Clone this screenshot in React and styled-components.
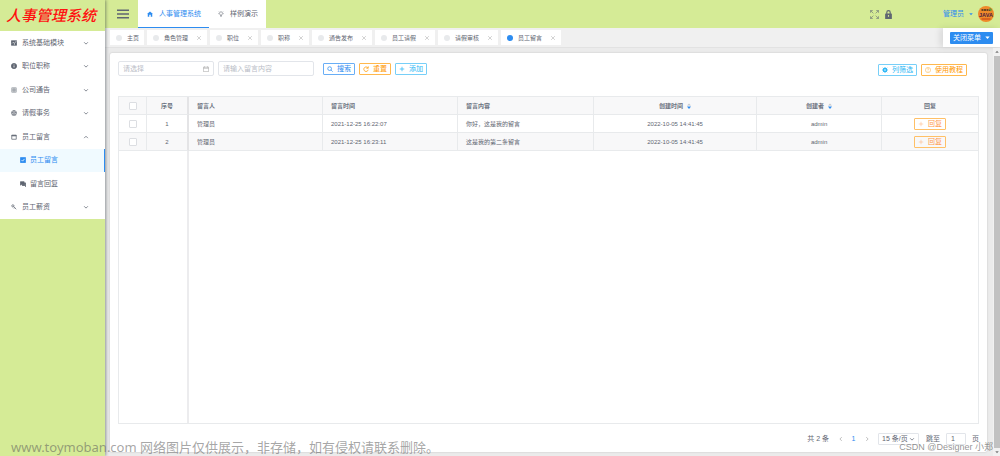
import React from 'react';
import styled, { createGlobalStyle, css } from 'styled-components';

const Global = createGlobalStyle`
  * { box-sizing: border-box; }
  body { margin: 0; background: #d5eb96; color: #5f6672; font: 7px/12px "Liberation Sans", "Noto Sans CJK SC", sans-serif; }
  button, input, select { font: inherit; color: inherit; margin: 0; padding: 0; }
  a { color: inherit; text-decoration: none; }
  svg { display: block; flex: none; }
`;

const Shell = styled.div`
  position: relative;
  display: grid;
  grid-template-columns: 105px minmax(0, 1fr);
  height: 100vh;
  overflow: hidden;
`;

const Side = styled.aside`
  position: relative;
  z-index: 2;
  background: #d5eb96;
  box-shadow: 1px 0 3px rgba(30, 40, 50, 0.45);
`;

const Logo = styled.h1`
  margin: 0;
  height: 31px;
  padding-left: 6px;
  color: #ff1010;
  font: italic 500 15px/29px "Noto Sans CJK SC", sans-serif;
  white-space: nowrap;
`;

const Menu = styled.nav`
  display: grid;
  grid-auto-rows: 1fr;
  height: 188px;
  background: #fff;
`;

const MenuItem = styled.a`
  display: flex;
  align-items: center;
  gap: ${(p) => (p.$sub ? 4 : 5)}px;
  padding: 0 15px 0 ${(p) => (p.$sub ? 20 : 11)}px;
  color: ${(p) => (p.$active ? '#2d8cf0' : '#5f6672')};
  background: ${(p) => (p.$active ? '#f0faff' : 'transparent')};
  border-right: 1px solid ${(p) => (p.$active ? '#2d8cf0' : 'transparent')};
`;

const MenuText = styled.span`
  flex: 1;
`;

const Main = styled.div`
  display: flex;
  flex-direction: column;
  min-width: 0;
  background: #ebebeb;
`;

const Header = styled.header`
  display: flex;
  align-items: center;
  flex: none;
  height: 28px;
  background: #d5eb96;
`;

const IconButton = styled.button`
  display: grid;
  place-items: center;
  border: 0;
  background: none;
`;

const Burger = styled(IconButton)`
  width: 33px;
  height: 28px;
  padding-left: 3px;
`;

const TopLink = styled.a`
  display: flex;
  align-items: center;
  gap: 6px;
  height: 28px;
  padding: 0 8px 0 9px;
  background: #fff;
  color: ${(p) => (p.$active ? '#2d8cf0' : '#5f6672')};
  border-bottom: 1px solid ${(p) => (p.$active ? '#2d8cf0' : '#fff')};
`;

const Account = styled.div`
  display: flex;
  align-items: center;
  gap: 5px;
  margin-left: auto;
  padding-right: 6px;
`;

const UserButton = styled.button`
  display: flex;
  align-items: center;
  gap: 5px;
  margin-left: 45px;
  border: 0;
  background: none;
  color: #2d8cf0;
`;

const TabBar = styled.div`
  display: flex;
  align-items: center;
  flex: none;
  height: 20px;
  padding-left: 5px;
  background: #f0f0f0;
  border-bottom: 1px solid #e2e2e2;
`;

const Tabs = styled.div`
  display: flex;
  gap: 3px;
`;

const Tab = styled.div`
  display: flex;
  align-items: center;
  height: 15px;
  padding: 0 5px 0 6px;
  background: #fff;
  font-size: 6px;
`;

const TabLink = styled.a`
  display: flex;
  align-items: center;
  gap: 5px;

  &::before {
    content: '';
    width: 6px;
    height: 6px;
    border-radius: 50%;
    background: ${(p) => (p.$active ? '#2d8cf0' : '#e8eaec')};
  }
`;

const TabClose = styled(IconButton)`
  margin-left: 8px;
  color: #aaa;
`;

const CloseBox = styled.div`
  display: flex;
  align-items: center;
  height: 19px;
  margin-left: auto;
  padding: 0 7px;
  background: #fff;
  box-shadow: -3px 0 6px rgba(0, 0, 0, 0.1);
`;

const CloseMenu = styled.button`
  display: flex;
  align-items: center;
  gap: 4px;
  height: 12px;
  padding: 0 3px;
  border: 0;
  border-radius: 1px;
  background: #2d8cf0;
  color: #fff;
`;

const Body = styled.div`
  display: flex;
  flex: 1;
  min-height: 0;
`;

const Scroll = styled.div`
  display: flex;
  flex: 1;
  min-width: 0;
  padding: 5px 6px 4px 5px;
`;

const Card = styled.main`
  display: flex;
  flex-direction: column;
  flex: 1;
  min-width: 0;
  padding: 8px 8px 7px;
  border-radius: 2px;
  background: #fff;
  box-shadow: 0 0 2px rgba(0, 0, 0, 0.2);
`;

const ScrollBar = styled.div`
  display: flex;
  flex-direction: column;
  align-items: center;
  gap: 2px;
  width: 7px;
  padding: 2px 0;
  background: #f1f1f1;
  color: #777;
`;

const Thumb = styled.div`
  flex: 1;
  width: 6px;
  background: #c1c1c1;
`;

const Tools = styled.form`
  display: flex;
  align-items: center;
  gap: 4px;
  height: 15px;
`;

const Field = styled.label`
  display: flex;
  align-items: center;
  width: 96px;
  height: 15px;
  padding: 0 4px;
  border: 1px solid #e2e5ea;
  border-radius: 2px;
  color: #999;
`;

const Input = styled.input`
  flex: 1;
  min-width: 0;
  border: 0;
  outline: 0;
  background: none;
  &::placeholder { color: #b9bdc6; opacity: 1; }
`;

const tones = {
  blue: css`color: #2d8cf0; border-color: #69aef6;`,
  orange: css`color: #ff9900; border-color: #ffb84d;`,
  cyan: css`color: #2db7f5; border-color: #77cff8;`,
  reply: css`color: #ff9a4d; border-color: #ffc067;`,
};

const Button = styled.button`
  display: inline-flex;
  align-items: center;
  gap: 4px;
  height: 12px;
  padding: 0 3px;
  border: 1px solid;
  border-radius: 1px;
  background: transparent;
  font-size: 7px;
  white-space: nowrap;
  vertical-align: middle;
  ${(p) => tones[p.$tone]}
`;

const Actions = styled.div`
  display: flex;
  gap: 4px;
  margin-left: 5px;
`;

const RightActions = styled(Actions)`
  margin: 3px 12px 0 auto;
`;

const TableBox = styled.div`
  flex: 1;
  display: grid;
  grid-template-columns: 70px 1fr;
  grid-template-rows: auto 1fr;
  margin-top: 20px;
  border: 1px solid #e8eaec;
`;

const Table = styled.table`
  grid-column: 1 / -1;
  width: 100%;
  table-layout: fixed;
  border-collapse: separate;
  border-spacing: 0;
  font-size: 6px;
`;

const Row = styled.tr`
  height: 18px;
  background: ${(p) => (p.$shade ? '#f8f8f9' : '#fff')};
`;

const cell = css`
  padding: 0 8px;
  border-right: 1px solid #e8eaec;
  border-bottom: 1px solid #e8eaec;
  text-align: ${(p) => (p.$left ? 'left' : 'center')};
  &:last-child { border-right: 0; }
  &:nth-child(2) { border-right: 2px solid #e4e4e6; }
`;

const Th = styled.th`${cell} font-weight: 700; color: #6b7280;`;
const Td = styled.td`${cell}`;

const Check = styled.input`
  appearance: none;
  display: block;
  width: 8px;
  height: 8px;
  margin: 0 auto;
  border: 1px solid #dcdee2;
  border-radius: 1px;
  background: #fff;
`;

const Sortable = styled.button`
  display: inline-flex;
  align-items: center;
  gap: 4px;
  border: 0;
  background: none;
  font-weight: 700;
  vertical-align: middle;
`;

const FixedEdge = styled.div`
  border-right: 2px solid #ececee;
`;

const Pager = styled.footer`
  display: flex;
  align-items: center;
  justify-content: flex-end;
  height: 12px;
  margin-top: 9px;
`;

const Total = styled.span`
  margin-right: 5px;
`;

const PageButton = styled(IconButton)`
  width: 13px;
  color: ${(p) => (p.$active ? '#2d8cf0' : '#aaa')};
`;

const PageSize = styled.label`
  display: flex;
  align-items: center;
  height: 12px;
  margin: 0 7px 0 5px;
  padding: 0 3px;
  border: 1px solid #e2e5ea;
  border-radius: 1px;
`;

const Select = styled.select`
  appearance: none;
  width: 27px;
  border: 0;
  background: none;
`;

const Jump = styled.label`
  display: flex;
  align-items: center;
  gap: 6px;
`;

const JumpInput = styled.input`
  width: 20px;
  height: 12px;
  padding: 0 4px;
  border: 1px solid #e2e5ea;
  border-radius: 1px;
`;

const SiteNote = styled.p`
  position: absolute;
  z-index: 3;
  left: 11px;
  bottom: 0;
  margin: 0;
  color: rgba(90, 90, 90, 0.55);
  font: 13px/18px "Noto Sans", "Noto Sans CJK SC", sans-serif;
  white-space: nowrap;
`;

const Credit = styled(SiteNote)`
  left: auto;
  right: 7px;
  bottom: 1px;
  color: rgba(100, 100, 100, 0.7);
  font: 9px/16px "Liberation Sans", "Noto Sans CJK SC", sans-serif;
`;

const shapes = {
  task: <><path fill="currentColor" d="M1 2h14v12H1z" /><path d="m3 9 3-3 3 3 5-6M9 13V9" stroke="#fff" strokeWidth="1.6" /></>,
  info: <><circle cx="8" cy="8" r="7" fill="currentColor" /><path d="M8 4v2M8 7v5" stroke="#fff" strokeWidth="2" /></>,
  grid: <path d="M2 2h12v12H2zM2 6h12M2 10h12M6 2v12M10 2v12" strokeWidth="1.2" />,
  ball: <><circle cx="8" cy="8" r="6.5" /><path d="m8 5 3 2-1 4H6L5 7zM8 1v4M2 6l3 1M4 14l2-3M12 14l-2-3M14 6l-3 1" /></>,
  window: <path d="M2 3h12v11H2zM2 4h12M2 5h12" />,
  checkbox: <><rect x="1" y="1" width="14" height="14" rx="1" fill="currentColor" /><path d="m4 8 3 3 5-6" stroke="#fff" /></>,
  chat: <path fill="currentColor" d="M1 2h10v7H4l-3 2zM12 5h3v10l-3-3H6v-2h6z" />,
  key: <><circle cx="5" cy="5" r="3" /><path d="m7 7 7 7M10 10l-2 2" /></>,
  down: <path d="m3 6 5 5 5-5" />,
  up: <path d="m3 11 5-5 5 5" />,
  left: <path d="m10 3-5 5 5 5" />,
  right: <path d="m6 3 5 5-5 5" />,
  close: <path d="m3 3 10 10M13 3 3 13" />,
  menu: <path d="M0 3h16M0 8h16M0 13h16" />,
  home: <path fill="currentColor" stroke="none" d="M8 1 0 8h2v7h4v-5h4v5h4V8h2z" />,
  bulb: <path d="M6 12h4M6 15h4M6 11c0-2-2-2-2-5a4 4 0 0 1 8 0c0 3-2 3-2 5zM0 7h2M14 7h2M2 1l1 1M14 1l-1 1" />,
  expand: <path d="M1 5V1h4M1 1l5 5M11 1h4v4M15 1l-5 5M1 11v4h4M1 15l5-5M15 11v4h-4M15 15l-5-5" />,
  lock: <><rect x="2" y="6" width="12" height="10" rx="1" fill="currentColor" stroke="none" /><path d="M5 7V4a3 3 0 0 1 6 0v3" strokeWidth="2" /><path d="M8 9v3" stroke="#d5eb96" strokeWidth="2" /></>,
  caret: <path fill="currentColor" stroke="none" d="M1 5h14l-7 8z" />,
  caretUp: <path fill="currentColor" stroke="none" d="M1 11h14L8 3z" />,
  calendar: <path d="M1 3h14v12H1zM1 6h14M4 1v3M12 1v3" />,
  search: <><circle cx="7" cy="7" r="5" /><path d="m11 11 4 4" /></>,
  reset: <path d="M13 5a6 6 0 1 0 1 5M14 1v5H9" />,
  plus: <path d="M8 2v12M2 8h12" />,
  gear: <><circle cx="8" cy="8" r="4" strokeWidth="4" /><path d="M8 0v4M8 12v4M0 8h4M12 8h4M2 2l3 3M11 11l3 3M14 2l-3 3M5 11l-3 3" strokeWidth="2" /></>,
  help: <><circle cx="8" cy="8" r="7" /><path d="M6 6c0-3 5-2 4 0-1 1-2 1-2 3M8 11v2" /></>,
};

const Icon = ({ name, size = 6, weight = 2 }) => (
  <svg width={size} height={size} viewBox="0 0 16 16" fill="none" stroke="currentColor" strokeWidth={weight} aria-hidden="true">
    {shapes[name]}
  </svg>
);

const SortMark = () => (
  <svg width="4" height="6" viewBox="0 0 8 12" aria-hidden="true">
    <path d="M0 5h8L4 1z" fill="#c5c8ce" />
    <path d="M0 7h8l-4 5z" fill="#2d8cf0" />
  </svg>
);

const Avatar = () => (
  <svg width="16" height="16" viewBox="0 0 32 32" role="img" aria-label="JAVA">
    <circle cx="16" cy="16" r="16" fill="#ee8a2a" />
    <path d="M7 8h18" stroke="#6a4420" strokeWidth="4" strokeDasharray="4 1" />
    <path d="M23 5l4 4" stroke="#6f9a35" strokeWidth="4" />
    <text x="16" y="21" textAnchor="middle" fontSize="11" fontWeight="700" fill="#4a2040">JAVA</text>
    <path d="M7 26h18" stroke="#d4561a" strokeWidth="3" />
  </svg>
);

const menu = [
  ['task', '系统基础模块', 'down'],
  ['info', '职位职称', 'down'],
  ['grid', '公司通告', 'down'],
  ['ball', '请假事务', 'down'],
  ['window', '员工留言', 'up'],
  ['checkbox', '员工留言', null, true],
  ['chat', '留言回复', null, false],
  ['key', '员工薪资', 'down'],
];

const tabs = ['主页', '角色管理', '职位', '职称', '通告发布', '员工请假', '请假审核', '员工留言'];

const rows = [
  ['管理员', '2021-12-25 16:22:07', '你好，这是我的留言', '2022-10-05 14:41:45', 'admin'],
  ['管理员', '2021-12-25 16:23:11', '这是我的第二条留言', '2022-10-05 14:41:45', 'admin'],
];

export default function App() {
  return (
    <Shell>
      <Global />
      <Side>
        <Logo>人事管理系统</Logo>
        <Menu>
          {menu.map(([icon, text, arrow, active]) => (
            <MenuItem key={icon} href="#" $sub={!arrow} $active={active}>
              <Icon name={icon} />
              <MenuText>{text}</MenuText>
              {arrow && <Icon name={arrow} />}
            </MenuItem>
          ))}
        </Menu>
      </Side>
      <Main>
        <Header>
          <Burger aria-label="菜单"><Icon name="menu" size={12} /></Burger>
          <TopLink href="#" $active><Icon name="home" />人事管理系统</TopLink>
          <TopLink href="#"><Icon name="bulb" weight={1.4} />样例演示</TopLink>
          <Account>
            <IconButton aria-label="全屏"><Icon name="expand" size={9} weight={1} /></IconButton>
            <IconButton aria-label="锁定"><Icon name="lock" size={9} /></IconButton>
            <UserButton>管理员<Icon name="caret" size={4} /></UserButton>
            <Avatar />
          </Account>
        </Header>
        <TabBar>
          <Tabs>
            {tabs.map((t, i) => (
              <Tab key={t}>
                <TabLink href="#" $active={i === 7}>{t}</TabLink>
                {i > 0 && <TabClose aria-label="关闭"><Icon name="close" weight={1.4} /></TabClose>}
              </Tab>
            ))}
          </Tabs>
          <CloseBox><CloseMenu>关闭菜单<Icon name="caret" size={5} /></CloseMenu></CloseBox>
        </TabBar>
        <Body>
          <Scroll>
            <Card>
              <Tools onSubmit={(e) => e.preventDefault()}>
                <Field><Input aria-label="日期" placeholder="请选择" /><Icon name="calendar" weight={1.4} /></Field>
                <Field><Input aria-label="留言内容" placeholder="请输入留言内容" /></Field>
                <Actions>
                  <Button type="button" $tone="blue"><Icon name="search" />搜索</Button>
                  <Button type="button" $tone="orange"><Icon name="reset" />重置</Button>
                  <Button type="button" $tone="cyan"><Icon name="plus" />添加</Button>
                </Actions>
                <RightActions>
                  <Button type="button" $tone="cyan"><Icon name="gear" />列筛选</Button>
                  <Button type="button" $tone="orange"><Icon name="help" weight={1} />使用教程</Button>
                </RightActions>
              </Tools>
              <TableBox>
                <Table>
                  <colgroup>
                    <col width="28" />
                    <col width="42" />
                    <col width="134" />
                    <col width="135" />
                    <col width="136" />
                    <col width="19%" />
                    <col />
                    <col width="96" />
                  </colgroup>
                  <thead>
                    <Row $shade>
                      <Th><Check type="checkbox" aria-label="全选" /></Th>
                      <Th>序号</Th>
                      <Th $left>留言人</Th>
                      <Th $left>留言时间</Th>
                      <Th $left>留言内容</Th>
                      <Th><Sortable>创建时间<SortMark /></Sortable></Th>
                      <Th><Sortable>创建者<SortMark /></Sortable></Th>
                      <Th>回复</Th>
                    </Row>
                  </thead>
                  <tbody>
                    {rows.map((r, i) => (
                      <Row key={r[1]} $shade={i === 1}>
                        <Td><Check type="checkbox" aria-label={`选择 ${i + 1}`} /></Td>
                        <Td>{i + 1}</Td>
                        {r.map((v, j) => <Td key={j} $left={j < 3}>{v}</Td>)}
                        <Td><Button $tone="reply"><Icon name="plus" weight={1} />回复</Button></Td>
                      </Row>
                    ))}
                  </tbody>
                </Table>
                <FixedEdge />
              </TableBox>
              <Pager>
                <Total>共 2 条</Total>
                <PageButton aria-label="上一页"><Icon name="left" /></PageButton>
                <PageButton $active>1</PageButton>
                <PageButton aria-label="下一页"><Icon name="right" /></PageButton>
                <PageSize>
                  <Select aria-label="每页条数"><option>15 条/页</option></Select>
                  <Icon name="down" />
                </PageSize>
                <Jump>跳至<JumpInput defaultValue="1" />页</Jump>
              </Pager>
            </Card>
          </Scroll>
          <ScrollBar><Icon name="caretUp" size={4} /><Thumb /><Icon name="caret" size={4} /></ScrollBar>
        </Body>
      </Main>
      <SiteNote>www.toymoban.com 网络图片仅供展示，非存储，如有侵权请联系删除。</SiteNote>
      <Credit>CSDN @Designer 小郑</Credit>
    </Shell>
  );
}
